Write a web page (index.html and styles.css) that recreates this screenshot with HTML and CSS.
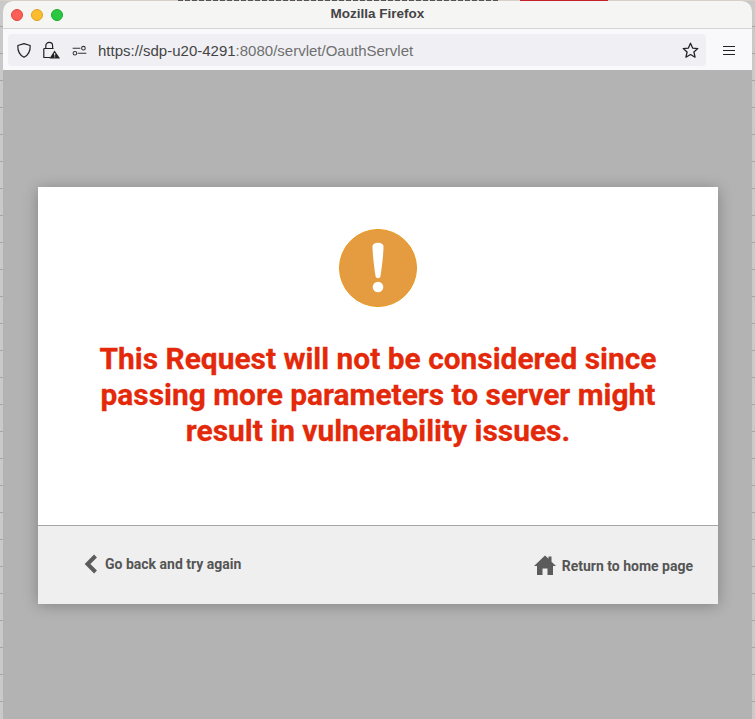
FILE: index.html
```html
<!DOCTYPE html>
<html lang="en">
<head>
    <meta charset="UTF-8">
    <title>Mozilla Firefox</title>
    <link rel="stylesheet" href="styles.css">
</head>
<body>
    <div class="window">
        <div class="titlebar">
            <div class="traffic">
                <span class="light light-red"></span>
                <span class="light light-yellow"></span>
                <span class="light light-green"></span>
            </div>
            <div class="window-title">Mozilla Firefox</div>
        </div>
        <div class="toolbar">
            <div class="urlbar">
                <svg class="tb-icon shield" viewBox="0 0 16 16"><path d="M8 1.2 L14.2 3 C14.4 8.5 12.6 12.6 8 14.8 C3.4 12.6 1.6 8.5 1.8 3 Z" fill="none" stroke="#222" stroke-width="1.2" stroke-linejoin="round"/></svg>
                <svg class="tb-icon lock" viewBox="0 0 18 18"><path d="M3.8 7.5 V4.8 a3.4 3.4 0 0 1 6.8 0 V7.5" fill="none" stroke="#222" stroke-width="1.2"/><path d="M1.8 7.5 H11.5 M1.8 7.5 V16.5 H8" fill="none" stroke="#222" stroke-width="1.2" stroke-linejoin="round"/><path d="M12.5 9.5 L18 17.5 H7.5 Z" fill="#222"/><path d="M12.7 12 V14.6 M12.7 15.5 V16.4" stroke="#fff" stroke-width="1"/></svg>
                <svg class="tb-icon perm" viewBox="0 0 16 12"><path d="M0.5 3.5 H9 M6 9 H15.5" stroke="#333" stroke-width="1.1" fill="none"/><circle cx="12.3" cy="3.5" r="2" fill="none" stroke="#333" stroke-width="1.1"/><circle cx="3" cy="9" r="2" fill="none" stroke="#333" stroke-width="1.1"/></svg>
                <div class="url"><span class="url-host">https://sdp-u20-4291</span>:8080/servlet/OauthServlet</div>
                <svg class="star" viewBox="0 0 16 16"><path d="M8 1.2 L10 5.7 L14.9 6.2 L11.2 9.4 L12.3 14.3 L8 11.8 L3.7 14.3 L4.8 9.4 L1.1 6.2 L6 5.7 Z" fill="none" stroke="#222" stroke-width="1.2" stroke-linejoin="round"/></svg>
            </div>
            <div class="menu-btn"><span></span><span></span><span></span></div>
        </div>
        <div class="viewport">
            <div class="card">
                <div class="card-body">
                    <svg class="alert-icon" viewBox="0 0 78 78">
                        <circle cx="39" cy="39" r="38.5" fill="#e59b3f" stroke="#e8981f" stroke-width="1"/>
                        <path d="M33.5 17.5 C33.5 12.5 44.5 12.5 44.5 17.5 C44.5 25 42.5 41 41.5 47 C41 50 37 50 36.5 47 C35.5 41 33.5 25 33.5 17.5 Z" fill="#fff"/>
                        <circle cx="39" cy="58" r="5.3" fill="#fff"/>
                    </svg>
                    <h1 class="message">This Request will not be considered since<br>passing more parameters to server might<br>result in vulnerability issues.</h1>
                </div>
                <div class="card-footer">
                    <a class="footer-link back">
                        <svg class="chevron" viewBox="0 0 14 20"><path d="M11.5 2 L3.5 10 L11.5 18" fill="none" stroke="#5b5b5b" stroke-width="4"/></svg>
                        Go back and try again
                    </a>
                    <a class="footer-link home">
                        <svg class="house" viewBox="0 0 22 20"><path d="M11 0.5 L14.5 3.8 V1.5 H17.5 V6.7 L22 11 H19 V20 H13.5 V13.5 H8.5 V20 H3 V11 H0 Z" fill="#5b5b5b"/></svg>
                        Return to home page
                    </a>
                </div>
            </div>
        </div>
    </div>
</body>
</html>
```

FILE: styles.css
```css
html, body { margin: 0; padding: 0; width: 755px; height: 719px; overflow: hidden; }
body { padding: 1px 0 0 3px; box-sizing: border-box; font-family: Roboto, "Liberation Sans", sans-serif; background: linear-gradient(#c4202a, #c4202a) 520px 0 / 88px 1px no-repeat, repeating-linear-gradient(90deg, #555 0, #555 5px, #d9cfc8 5px, #d9cfc8 7px) 178px 0 / 322px 1px no-repeat, linear-gradient(#d9cfc8, #d9cfc8) 0 0 / 100% 1px no-repeat, repeating-linear-gradient(#c9c9c9 0, #c9c9c9 26px, #a5a5a5 26px, #a5a5a5 27px); }

.window { width: 749px; height: 718px; border-radius: 10px 10px 0 0; overflow: hidden; display: flex; flex-direction: column; background: #b3b3b3; }

.titlebar { height: 27px; flex: none; display: flex; align-items: center; position: relative; background: #f5f5f4; border-bottom: 1px solid #d4d4d4; }
.traffic { display: flex; gap: 8px; padding-left: 8px; }
.light { width: 12px; height: 12px; border-radius: 50%; box-sizing: border-box; }
.light-red { background: #fb5f57; border: 1px solid #e0443e; }
.light-yellow { background: #fcbc2e; border: 1px solid #dea123; }
.light-green { background: #2ac840; border: 1px solid #1aab29; }
.window-title { position: absolute; left: 0; right: 0; top: 5px; text-align: center; font-family: "Liberation Sans", sans-serif; font-size: 13.5px; font-weight: 700; color: #444; }

.toolbar { height: 41px; flex: none; box-sizing: border-box; display: flex; align-items: center; padding: 1px 0 0 5px; background: #f9f9fb; }
.urlbar { width: 698px; height: 32px; box-sizing: border-box; display: flex; align-items: center; padding-right: 7px; background: #f0f0f4; border-radius: 4px; }
.tb-icon { flex: none; }
.shield { width: 16px; height: 17px; margin-left: 8px; }
.lock { width: 18px; height: 18px; margin-left: 10px; }
.perm { width: 15px; height: 11px; margin-left: 12px; }
.url { flex: 1; margin-left: 11px; font-family: "Liberation Sans", sans-serif; font-size: 15px; color: #6f6f6f; white-space: nowrap; }
.url-host { color: #444; }
.star { width: 17px; height: 17px; }
.menu-btn { display: flex; flex-direction: column; gap: 3px; margin-left: 17px; }
.menu-btn span { display: block; width: 12px; height: 1px; background: #222; }

.viewport { flex: 1; box-sizing: border-box; padding: 117px 0 0 35px; background: #b3b3b3; }
.card { width: 680px; height: 416px; display: flex; flex-direction: column; background: #fff; box-shadow: 0 2px 14px rgba(0,0,0,0.28); }
.card-body { height: 339px; flex: none; box-sizing: border-box; padding-top: 42px; display: flex; flex-direction: column; align-items: center; border-bottom: 1px solid #a6a6a6; }
.alert-icon { width: 78px; height: 78px; flex: none; }
.message { margin: 34px 0 0; font-size: 29.9px; line-height: 36px; font-weight: 700; text-align: center; color: #e4290a; white-space: nowrap; -webkit-text-stroke: 0.3px #e4290a; }

.card-footer { flex: 1; display: flex; justify-content: space-between; align-items: flex-start; background: #efefef; padding: 0 25px 0 46px; }
.footer-link { display: flex; align-items: center; height: 76px; font-size: 14px; font-weight: 700; color: #555; }
.back { gap: 7px; }
.home { gap: 6px; margin-top: 2px; }
.chevron { width: 14px; height: 20px; }
.house { width: 22px; height: 20px; margin-bottom: 2px; }
```
